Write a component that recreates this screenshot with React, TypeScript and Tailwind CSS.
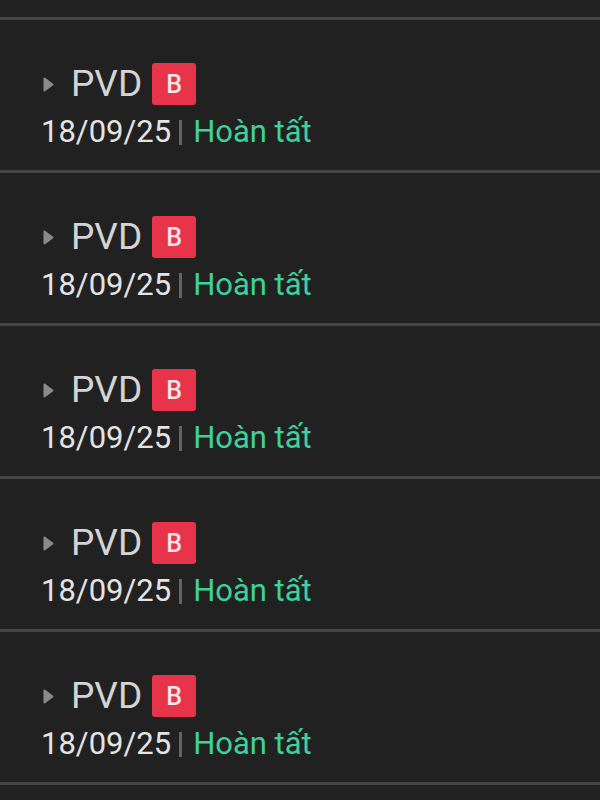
import React from "react";

function Row() {
  return (
    <div className="border-t-[3px] border-[#464646] pl-[41px] pt-[43px] pb-[20px]">
      <div className="flex h-[42px] items-center">
        <svg width="11" height="15" viewBox="0 0 11 15" className="ml-[2px] shrink-0">
          <path d="M1.5 1.5 L9.5 7.5 L1.5 13.5 Z" fill="#8a8a8a" stroke="#8a8a8a" strokeWidth="2" strokeLinejoin="round" />
        </svg>
        <span className="ml-[17px] text-[37px] leading-[42px] text-[#d4d4d4]">PVD</span>
        <span className="ml-[10px] flex h-[42px] w-[44px] items-center justify-center rounded-[3px] bg-[#e8344a] text-[25px] font-medium leading-none text-[#f6e4e6]">
          B
        </span>
      </div>
      <div className="mt-[9px] flex h-[36px] items-center">
        <span className="text-[31px] leading-[36px] text-[#e4e4e4]">18/09/25</span>
        <span className="ml-[8px] h-[25px] w-[3px] bg-[#636363]" />
        <span className="ml-[11px] text-[31px] leading-[36px] text-[#3fd09b]">Hoàn tất</span>
      </div>
    </div>
  );
}

export default function App() {
  return (
    <div
      className="h-[800px] w-[600px] overflow-hidden bg-[#212121]"
      style={{ fontFamily: "Roboto, 'Noto Sans', sans-serif" }}
    >
      <div className="h-[17px]" />
      <Row />
      <Row />
      <Row />
      <Row />
      <Row />
      <div className="border-t-[3px] border-[#464646]" />
    </div>
  );
}
